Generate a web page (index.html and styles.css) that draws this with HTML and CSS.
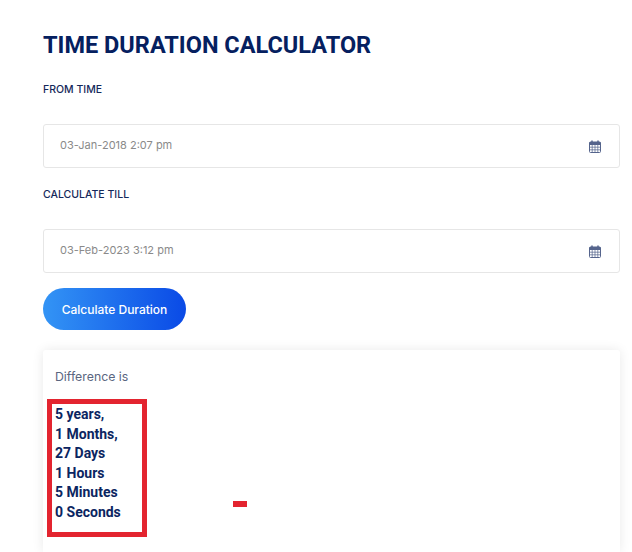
FILE: index.html
```html
<html><head>
<title>Time Duration Calculator</title>
<link rel="stylesheet" href="styles.css">
</head>
<body>
<div class="calc">
<h1>TIME DURATION CALCULATOR</h1>
<label class="lbl">FROM TIME</label>
<div class="field">
  <span>03-Jan-2018 2:07 pm</span>
  <svg class="cal" viewBox="0 0 12 13"><path d="M3 .5v3M9 .5v3" stroke="#55648c" stroke-width="1.5"/><rect x=".5" y="2" width="11" height="10.5" rx="1" fill="#fff" stroke="#55648c"/><path d="M.5 2h11v3H.5z" fill="#55648c"/><path d="M.5 7.2h11M.5 9.8h11M3.2 5v7.5M6 5v7.5M8.8 5v7.5" stroke="#55648c" stroke-width=".7"/></svg>
</div>
<label class="lbl">CALCULATE TILL</label>
<div class="field">
  <span>03-Feb-2023 3:12 pm</span>
  <svg class="cal" viewBox="0 0 12 13"><path d="M3 .5v3M9 .5v3" stroke="#55648c" stroke-width="1.5"/><rect x=".5" y="2" width="11" height="10.5" rx="1" fill="#fff" stroke="#55648c"/><path d="M.5 2h11v3H.5z" fill="#55648c"/><path d="M.5 7.2h11M.5 9.8h11M3.2 5v7.5M6 5v7.5M8.8 5v7.5" stroke="#55648c" stroke-width=".7"/></svg>
</div>
<button class="btn">Calculate Duration</button>
<div class="result">
  <p class="diff">Difference is</p>
  <div class="box">
    5 years,<br>
    1 Months,<br>
    27 Days<br>
    1 Hours<br>
    5 Minutes<br>
    0 Seconds
  </div>
  <div class="dash"></div>
</div>
</div>
</body>
</html>
```

FILE: styles.css
```css
html, body { height: 552px; overflow: hidden; }
body { margin: 0; background: #fff; font-family: Inter, sans-serif; color: #0b2561; }
.calc { padding: 33px 12px 0 43px; }
h1 { margin: 0 0 26px; font-family: Roboto, sans-serif; font-size: 23.5px; line-height: 24px; font-weight: 700; color: #05205f; }
.lbl { display: block; height: 14px; margin-bottom: 27px; font-size: 10.5px; line-height: 14px; font-weight: 500; color: #14285a; }
.field { display: flex; align-items: center; justify-content: space-between; box-sizing: border-box; height: 44px; padding: 0 18px 0 16px; border: 1px solid #e6e6e6; border-radius: 3px; font-size: 11px; color: #8a8a8a; }
.field span { margin-bottom: 2px; }
.field + .lbl { margin-top: 20px; }
.cal { width: 12px; height: 13px; }
.btn { display: block; width: 143px; height: 42px; margin: 15px 0 20px; padding: 0 0 0 0; border: 0; border-radius: 21px; background: linear-gradient(90deg, #3394f5, #0a4ae6); font-family: Inter, sans-serif; font-size: 12px; font-weight: 500; color: #fff; }
.result { position: relative; height: 202px; box-sizing: border-box; padding: 20px 12px 0; border-radius: 3px 3px 0 0; box-shadow: 0 0 12px rgba(0, 0, 0, .09); }
.diff { margin: 0 0 15px; font-size: 12.3px; line-height: 14px; color: #5a6680; }
.box { box-sizing: border-box; width: 100px; height: 138px; margin-left: -8px; padding: 1px 3px; border: 5px solid #e3242f; font-family: Roboto, sans-serif; font-size: 14px; line-height: 19.5px; font-weight: 700; color: #0b2561; }
.dash { position: absolute; left: 190px; top: 151px; width: 14px; height: 6px; background: #e3242f; }
```
